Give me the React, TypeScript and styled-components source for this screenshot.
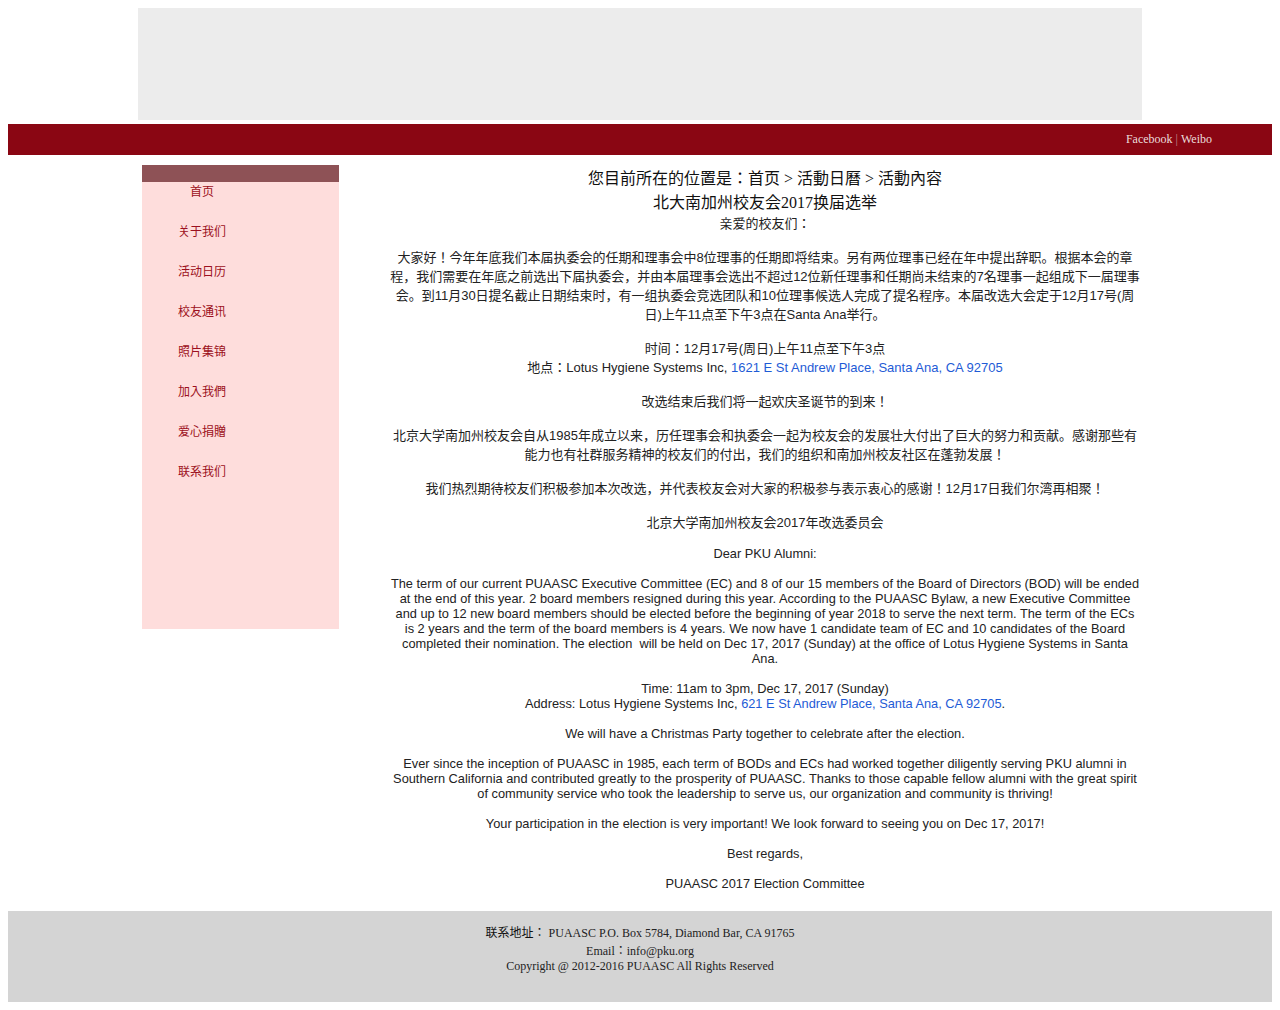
import React from "react";
import styled, { createGlobalStyle } from "styled-components";

const Global = createGlobalStyle`
  body {
    margin: 8px;
    background: #ffffff;
    font-family: "Liberation Sans", "Noto Sans CJK JP", sans-serif;
    color: #222;
  }
  p { margin: 0; }
`;

const Page = styled.div`
  display: flex;
  flex-direction: column;
`;

const Banner = styled.div`
  width: 1004px;
  height: 112px;
  margin-left: 130px;
  background: #ececec;
`;

const TopBar = styled.div`
  margin-top: 4px;
  height: 31px;
  background: #8a0613;
  display: flex;
  align-items: center;
  justify-content: flex-end;
  padding-right: 60px;
  font-family: "Liberation Serif", "Noto Sans CJK JP", serif;
  font-size: 12px;
  color: #e6d6d6;
`;

const BarLink = styled.span`
  color: #eadcdc;
`;

const Sep = styled.span`
  color: #c08a8e;
  margin: 0 3px;
`;

const Main = styled.div`
  width: 1000px;
  margin: 10px auto 0;
  display: flex;
  align-items: flex-start;
`;

const Sidebar = styled.div`
  width: 197px;
  height: 464px;
  margin-left: 2px;
  background: #fedddc;
  display: flex;
  flex-direction: column;
`;

const SideHead = styled.div`
  height: 17px;
  background: #8e5256;
  margin-bottom: 1px;
`;

const Menu = styled.ul`
  list-style: none;
  margin: 0;
  padding: 0;
  width: 120px;
  display: flex;
  flex-direction: column;
  gap: 22px;
`;

const MenuItem = styled.li`
  height: 18px;
  line-height: 18px;
  text-align: center;
  font-size: 12px;
  color: #9c1020;
`;

const Content = styled.div`
  width: 750px;
  margin-left: auto;
  padding-top: 2px;
  text-align: center;
  font-size: 13px;
  color: #222;
`;

const Heading = styled.div<{ $sub?: boolean }>`
  font-family: "Liberation Serif", "Noto Sans CJK JP", serif;
  font-size: 16px;
  line-height: ${(p) => (p.$sub ? 22 : 24)}px;
  margin-top: ${(p) => (p.$sub ? 1 : 0)}px;
  color: #111;
`;

const Crumb = styled.span`
  margin: 0 4px;
`;

const CnPara = styled.p<{ $gap?: number }>`
  line-height: 19px;
  margin-bottom: ${(p) => (p.$gap ?? 15)}px !important;
`;

const EnPara = styled.p<{ $gap?: number }>`
  font-size: 12.8px;
  line-height: 15px;
  margin-bottom: ${(p) => (p.$gap ?? 15)}px !important;
`;

const Link = styled.a`
  color: #1e5bd6;
  text-decoration: none;
`;

const Footer = styled.div`
  margin-top: 20px;
  height: 91px;
  box-sizing: border-box;
  padding-top: 11px;
  background: #d4d4d4;
  text-align: center;
  font-family: "Liberation Serif", "Noto Sans CJK JP", serif;
  font-size: 12px;
  color: #222;
`;

const FootLine = styled.div<{ $h: number }>`
  line-height: ${(p) => p.$h}px;
`;

const FootLabel = styled.span`
  font-family: "Noto Sans CJK JP", sans-serif;
  font-size: 12px;
  color: #111;
`;

const menu = ["首页", "关于我们", "活动日历", "校友通讯", "照片集锦", "加入我們", "爱心捐贈", "联系我们"];

export default function App() {
  return (
    <Page>
      <Global />
      <Banner />
      <TopBar>
        <BarLink>Facebook</BarLink>
        <Sep>|</Sep>
        <BarLink>Weibo</BarLink>
      </TopBar>
      <Main>
        <Sidebar>
          <SideHead />
          <Menu>
            {menu.map((m) => (
              <MenuItem key={m}>{m}</MenuItem>
            ))}
          </Menu>
        </Sidebar>
        <Content>
          <Heading>
            您目前所在的位置是：首页<Crumb>&gt;</Crumb>活動日曆<Crumb>&gt;</Crumb>活動內容
          </Heading>
          <Heading $sub>北大南加州校友会2017换届选举</Heading>
          <CnPara>亲爱的校友们：</CnPara>
          <CnPara>
            大家好！今年年底我们本届执委会的任期和理事会中8位理事的任期即将结束。另有两位理事已经在年中提出辞职。根据本会的章程，我们需要在年底之前选出下届执委会，并由本届理事会选出不超过12位新任理事和任期尚未结束的7名理事一起组成下一届理事会。到11月30日提名截止日期结束时，有一组执委会竞选团队和10位理事候选人完成了提名程序。本届改选大会定于12月17号(周日)上午11点至下午3点在Santa Ana举行。
          </CnPara>
          <CnPara>
            时间：12月17号(周日)上午11点至下午3点
            <br />
            地点：Lotus Hygiene Systems Inc, <Link href="#">1621 E St Andrew Place, Santa Ana, CA 92705</Link>
          </CnPara>
          <CnPara>改选结束后我们将一起欢庆圣诞节的到来！</CnPara>
          <CnPara>
            北京大学南加州校友会自从1985年成立以来，历任理事会和执委会一起为校友会的发展壮大付出了巨大的努力和贡献。感谢那些有能力也有社群服务精神的校友们的付出，我们的组织和南加州校友社区在蓬勃发展！
          </CnPara>
          <CnPara>我们热烈期待校友们积极参加本次改选，并代表校友会对大家的积极参与表示衷心的感谢！12月17日我们尔湾再相聚！</CnPara>
          <CnPara $gap={14}>北京大学南加州校友会2017年改选委员会</CnPara>
          <EnPara>Dear PKU Alumni:</EnPara>
          <EnPara>
            The term of our current PUAASC Executive Committee (EC) and 8 of our 15 members of the Board of Directors (BOD) will be ended at the end of this year. 2 board members resigned during this year. According to the PUAASC Bylaw, a new Executive Committee and up to 12 new board members should be elected before the beginning of year 2018 to serve the next term. The term of the ECs is 2 years and the term of the board members is 4 years. We now have 1 candidate team of EC and 10 candidates of the Board completed their nomination. The election{"\u00a0"} will be held on Dec 17, 2017 (Sunday) at the office of Lotus Hygiene Systems in Santa Ana.
          </EnPara>
          <EnPara>
            Time: 11am to 3pm, Dec 17, 2017 (Sunday)
            <br />
            Address: Lotus Hygiene Systems Inc, <Link href="#">621 E St Andrew Place, Santa Ana, CA 92705</Link>.
          </EnPara>
          <EnPara>We will have a Christmas Party together to celebrate after the election.</EnPara>
          <EnPara>
            Ever since the inception of PUAASC in 1985, each term of BODs and ECs had worked together diligently serving PKU alumni in Southern California and contributed greatly to the prosperity of PUAASC. Thanks to those capable fellow alumni with the great spirit of community service who took the leadership to serve us, our organization and community is thriving!
          </EnPara>
          <EnPara>Your participation in the election is very important! We look forward to seeing you on Dec 17, 2017!</EnPara>
          <EnPara>Best regards,</EnPara>
          <EnPara $gap={0}>PUAASC 2017 Election Committee</EnPara>
        </Content>
      </Main>
      <Footer>
        <FootLine $h={19}>
          <FootLabel>联系地址：</FootLabel> PUAASC P.O. Box 5784, Diamond Bar, CA 91765
        </FootLine>
        <FootLine $h={16}>Email：info@pku.org</FootLine>
        <FootLine $h={15}>Copyright @ 2012-2016 PUAASC All Rights Reserved</FootLine>
      </Footer>
    </Page>
  );
}
